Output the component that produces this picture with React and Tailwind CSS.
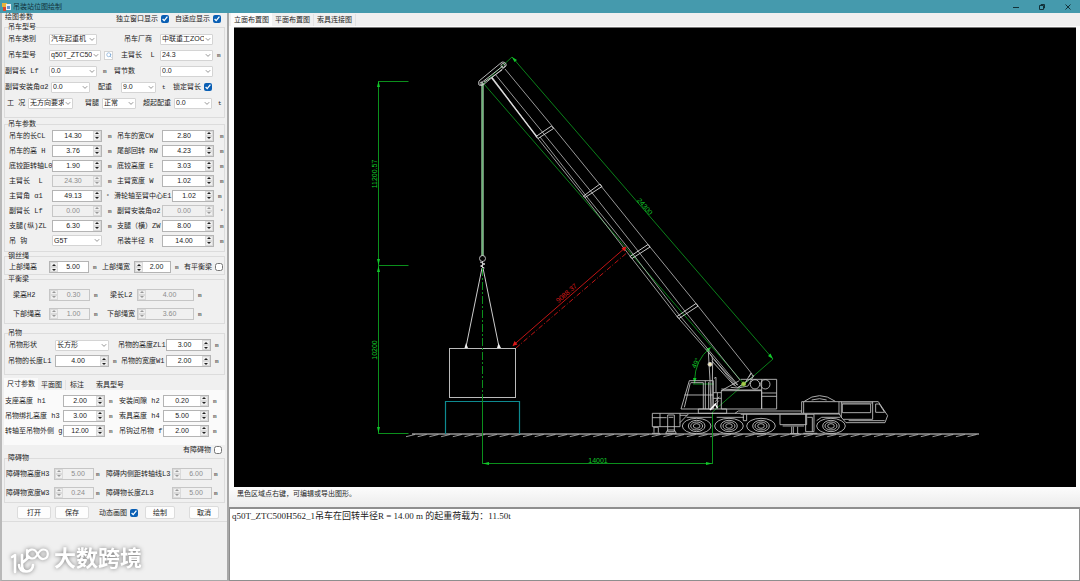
import React, { useId, useState } from "react";
import { Search } from "lucide-react";

const Row = ({ className, children }) => (
  <div className={`grid items-center ${className}`}>{children}</div>
);

const Unit = ({ children }) => (
  <span className="font-['Liberation_Mono',monospace] text-[6px] leading-[6px] pt-0.5">
    {children}
  </span>
);

const Combo = ({ label, value }) => {
  const id = useId();
  return (
    <>
      <label htmlFor={id} className="whitespace-pre">
        {label}
      </label>
      <div className="relative h-[11px]">
        <select
          id={id}
          className="block w-full h-full appearance-none bg-white border border-[#d4d4d4] rounded-[1px] pl-px pr-[7px] font-['Liberation_Sans','Noto_Sans_CJK_SC',sans-serif] overflow-hidden"
        >
          <option>{value}</option>
        </select>
        <svg
          viewBox="0 0 8 8"
          className="absolute right-px top-0.5 w-2 h-[7px] bg-white pointer-events-none"
        >
          <path d="M1.5 2.5 4 5 6.5 2.5" fill="none" stroke="#666" strokeWidth="0.8" />
        </svg>
      </div>
    </>
  );
};

const Spin = ({ label, initial, disabled, left, step = 0.1 }) => {
  const id = useId();
  const [value, setValue] = useState(initial);
  const bump = (d) => setValue((v) => (Number(v) + d).toFixed(2));
  const arrow = disabled ? "#999" : "#222";

  return (
    <>
      <label htmlFor={id} className="whitespace-pre">
        {label}
      </label>
      <div
        className={`flex h-3 border ${left ? "flex-row-reverse" : ""} ${
          disabled ? "bg-[#f0f0f0] border-[#c6c6c6]" : "bg-white border-[#b4b4b4]"
        }`}
      >
        <input
          id={id}
          type="text"
          inputMode="decimal"
          value={value}
          disabled={disabled}
          onChange={(e) => setValue(e.target.value)}
          className="min-w-0 flex-1 text-center font-['Liberation_Sans',sans-serif] leading-[10px] text-[#222] disabled:text-[#8c8c8c]"
        />
        <div className="flex flex-col w-2 shrink-0 bg-[#efefef]">
          <button
            type="button"
            aria-label="增加"
            disabled={disabled}
            onClick={() => bump(step)}
            className="flex-1 flex items-center justify-center border border-[#dadada]"
          >
            <svg viewBox="0 0 4 2" className="w-1 h-0.5">
              <path d="M0 2 2 0 4 2z" fill={arrow} />
            </svg>
          </button>
          <button
            type="button"
            aria-label="减少"
            disabled={disabled}
            onClick={() => bump(-step)}
            className="flex-1 flex items-center justify-center border border-[#dadada]"
          >
            <svg viewBox="0 0 4 2" className="w-1 h-0.5">
              <path d="M0 0 2 2 4 0z" fill={arrow} />
            </svg>
          </button>
        </div>
      </div>
    </>
  );
};

const Check = ({ label, checked }) => (
  <label className="flex items-center gap-[3px] whitespace-nowrap">
    {label}
    <input type="checkbox" defaultChecked={checked} className="size-2 accent-[#0a5fb4]" />
  </label>
);

const Group = ({ title, className = "", children }) => (
  <fieldset className={`mx-0.5 border border-[#dcdcdc] min-w-0 ${className}`}>
    <legend className="ml-[3px] leading-2">{title}</legend>
    {children}
  </fieldset>
);

const PushButton = ({ children }) => (
  <button
    type="button"
    className="h-[13px] bg-[#fdfdfd] border border-[#dcdcdc] rounded-[2px] leading-[10px]"
  >
    {children}
  </button>
);

const craneParams = [
  ["吊车的长CL", "14.30", "m", "吊车的宽CW", "2.80", "m"],
  ["吊车的高 H", "3.76", "m", "尾部回转 RW", "4.23", "m"],
  ["底铰距转轴L0", "1.90", "m", "底铰高度 E", "3.03", "m"],
  ["主臂长  L", "24.30", "m", "主臂宽度 W", "1.02", "m", true],
  ["主臂角 α1", "49.13", "°", "滑轮轴至臂中心E1", "1.02", "m"],
  ["副臂长 Lf", "0.00", "m", "副臂安装角α2", "0.00", "°", true, true],
  ["支腿(纵)ZL", "6.30", "m", "支腿（横）ZW", "8.00", "m"],
];

const sizeParams = [
  ["支座高度 h1", "2.00", "安装间隙 h2", "0.20"],
  ["吊物绑扎高度 h3", "3.00", "索具高度 h4", "5.00"],
  ["转轴至吊物外侧 g", "12.00", "吊钩过吊物 f", "2.00"],
];

const WIDE = "h-[15px] pl-1 grid-cols-[43px_50px_15px_45px_52px_1fr] [&>span]:pl-1.5";
const NARROW = "h-[15px] pl-1 grid-cols-[43px_50px_12px_58px_42px_1fr] [&>span]:pl-1";

const Watermark = () => (
  <div className="mt-auto mb-1 ml-2 flex items-center text-white drop-shadow-[0_0_2px_#777]">
    <svg
      viewBox="0 0 44 30"
      className="w-11 h-[30px]"
      fill="none"
      stroke="currentColor"
      strokeWidth="2.6"
      strokeLinecap="round"
      strokeLinejoin="round"
    >
      <path d="M2 11 5 9V26" />
      <path d="M12 9V18C12 23 14 25.500 17 25.500C20 25.500 23 23 23 19M9 19C9 23 12 26 17 25.500M12 17 19 11" />
      <path
        d="M17 4V12M17 8C18 3 24 2 26.500 6C28.500 10 30 13.500 33.500 13C39.500 12 39 3.500 33.500 3.500C29.500 3.500 28.500 7 26.500 10C24 14 18 13 17 8"
        strokeWidth="2.2"
      />
    </svg>
    <span className="text-[22px] leading-[30px] font-bold">大数跨境</span>
  </div>
);

const SidePanel = () => (
  <aside className="w-[229px] shrink-0 flex flex-col border-l-2 border-l-[#b9b9b9] border-r-2 border-r-[#a8a8a8] border-b border-b-[#a8a8a8]">
    <form className="pb-0.5 border-b border-[#dcdcdc]">
      <div className="flex h-2.5 pl-[3px] pr-1.5 leading-2">
        <span className="flex-1 self-start">绘图参数</span>
        <div className="flex gap-1.5 self-end">
          <Check label="独立窗口显示" checked />
          <Check label="自适应显示" checked />
        </div>
      </div>

      <Group title="吊车型号" className="pb-1.5">
        <Row className="h-4 pl-[3px] grid-cols-[41px_48px_27px_36px_53px]">
          <Combo label="吊车类别" value="汽车起重机" />
          <span />
          <Combo label="吊车厂商" value="中联重工ZOOMLION" />
        </Row>
        <Row className="h-4 pl-[3px] grid-cols-[41px_52px_20px_39px_53px_1fr]">
          <Combo label="吊车型号" value="q50T_ZTC500H562_1" />
          <button
            type="button"
            aria-label="查找"
            className="ml-[3px] size-[9px] flex items-center justify-center bg-white border border-[#d4d4d4]"
          >
            <Search className="size-1.5" color="#4a86c5" />
          </button>
          <Combo label="主臂长  L" value="24.3" />
          <span className="pl-1"><Unit>m</Unit></span>
        </Row>
        <Row className="h-4 grid-cols-[44px_48px_17px_46px_53px]">
          <Combo label="副臂长 Lf" value="0.0" />
          <span className="pl-1.5"><Unit>m</Unit></span>
          <Combo label="臂节数" value="0.0" />
        </Row>
        <Row className="h-4 grid-cols-[46px_39px_8px_23px_35px_17px_40px]">
          <Combo label="副臂安装角α2" value="0.0" />
          <span />
          <Combo label="配重" value="9.0" />
          <span className="pl-1.5"><Unit>t</Unit></span>
          <Check label="锁定臂长" checked />
        </Row>
        <Row className="h-4 pl-0.5 grid-cols-[21px_45px_12px_17px_34px_7px_31px_38px_1fr]">
          <Combo label="工 况" value="无方向要求" />
          <span />
          <Combo label="臂腿" value="正常" />
          <span />
          <Combo label="超起配重" value="0.0" />
          <span className="pl-1.5"><Unit>t</Unit></span>
        </Row>
      </Group>

      <Group title="吊车参数" className="mt-0.5 pb-[3px]">
        {craneParams.map(([l, lv, lu, r, rv, ru, lOff, rOff]) => (
          <Row key={l} className={r.length > 8 ? NARROW : WIDE}>
            <Spin label={l} initial={lv} disabled={lOff} />
            <Unit>{lu}</Unit>
            <Spin label={r} initial={rv} disabled={rOff} />
            <Unit>{ru}</Unit>
          </Row>
        ))}
        <Row className={WIDE}>
          <Combo label="吊 钩" value="G5T" />
          <Unit />
          <Spin label="吊装半径 R" initial="14.00" />
          <Unit>m</Unit>
        </Row>
      </Group>

      <Group title="钢丝绳">
        <Row className="h-3.5 pl-1 grid-cols-[40px_40px_13px_32px_37px_13px_1fr] [&>span]:pl-1">
          <Spin label="上部绳高" initial="5.00" left />
          <Unit>m</Unit>
          <Spin label="上部绳宽" initial="2.00" left />
          <Unit>m</Unit>
          <Check label="有平衡梁" />
        </Row>
      </Group>

      <Group title="平衡梁" className="pt-0.5">
        <Row className="h-[19px] pl-2 grid-cols-[36px_41px_20px_27px_57px_1fr] [&>span]:pl-1">
          <Spin label="梁高H2" initial="0.30" left disabled />
          <Unit>m</Unit>
          <Spin label="梁长L2" initial="4.00" left disabled />
          <Unit>m</Unit>
        </Row>
        <Row className="h-[19px] pl-2 grid-cols-[36px_41px_17px_30px_57px_1fr] [&>span]:pl-1">
          <Spin label="下部绳高" initial="1.00" left disabled />
          <Unit>m</Unit>
          <Spin label="下部绳宽" initial="3.60" left disabled />
          <Unit>m</Unit>
        </Row>
      </Group>

      <Group title="吊物" className="mt-[5px] pb-[5px]">
        <Row className="h-4 pl-1 grid-cols-[46px_54px_9px_48px_45px_1fr] [&>span]:pl-1">
          <Combo label="吊物形状" value="长方形" />
          <Unit />
          <Spin label="吊物的高度ZL1" initial="3.00" />
          <Unit>m</Unit>
        </Row>
        <Row className="h-4 pl-[3px] grid-cols-[47px_54px_12px_45px_45px_1fr] [&>span]:pl-1">
          <Spin label="吊物的长度L1" initial="4.00" />
          <Unit>m</Unit>
          <Spin label="吊物的宽度W1" initial="2.00" />
          <Unit>m</Unit>
        </Row>
      </Group>

      <div className="mt-[3px] ml-0.5 flex h-3 items-end leading-[10px]" role="tablist">
        <button type="button" role="tab" aria-selected="true" className="h-3 px-[3px] bg-[#fafafa]">
          尺寸参数
        </button>
        <button type="button" role="tab" className="px-[3px] border-r border-[#e2e2e2]">
          平面图
        </button>
        <button type="button" role="tab" className="pl-1 pr-2">
          标注
        </button>
        <button type="button" role="tab" className="px-1">
          索具型号
        </button>
      </div>
      <div className="mx-0.5 bg-[#fafafa] pt-[3px] pb-[7px]">
        {sizeParams.map(([l, lv, r, rv]) => (
          <Row
            key={l}
            className="h-[15px] pl-px grid-cols-[58px_42px_14px_44px_46px_1fr] [&>span]:pl-1"
          >
            <Spin label={l} initial={lv} />
            <Unit>m</Unit>
            <Spin label={r} initial={rv} />
            <Unit>m</Unit>
          </Row>
        ))}
      </div>

      <div className="mt-px flex h-2 justify-end pr-[5px]">
        <Check label="有障碍物" />
      </div>
      <Group title="障碍物" className="pt-0.5">
        <Row className="h-[19px] pl-px grid-cols-[48px_40px_12px_66px_40px_1fr] [&>span]:pl-0.5">
          <Spin label="障碍物高度H3" initial="5.00" left disabled />
          <Unit>m</Unit>
          <Spin label="障碍内侧距转轴线L3" initial="6.00" left disabled />
          <Unit>m</Unit>
        </Row>
        <Row className="h-[19px] pl-px grid-cols-[48px_40px_12px_66px_40px_1fr] [&>span]:pl-0.5">
          <Spin label="障碍物宽度W3" initial="0.24" left disabled />
          <Unit>m</Unit>
          <Spin label="障碍物长度ZL3" initial="5.00" left disabled />
          <Unit>m</Unit>
        </Row>
      </Group>

      <Row className="mt-[3px] pl-[15px] grid-cols-[34px_4px_34px_10px_46px_30px_14px_30px]">
        <PushButton>打开</PushButton>
        <span />
        <PushButton>保存</PushButton>
        <span />
        <Check label="动态画图" checked />
        <PushButton>绘制</PushButton>
        <span />
        <PushButton>取消</PushButton>
      </Row>
    </form>
    <Watermark />
  </aside>
);

const hatches = Array.from({ length: 49 }, (_, i) => 415 + i * 11.7);
const wheels = [170, 267, 363, 573];

const CraneDrawing = () => (
  <svg
    viewBox="234 28 842 459"
    className="w-full h-full block"
    fill="none"
    fontFamily="Liberation Sans, sans-serif"
    fontSize="7"
  >
    {/* ground */}
    <path d="M412 434H979" stroke="#ddd" strokeWidth="1.2" />
    {hatches.map((x) => (
      <path key={x} d={`M${x} 434.5l-9 2.2`} stroke="#bbb" strokeWidth="0.8" />
    ))}

    {/* load and support */}
    <rect x="449.5" y="348.5" width="66" height="49" stroke="#bbb" />
    <path d="M445.5 434V401.500H519.5V434" stroke="#0e8a90" strokeWidth="1.2" />
    <path d="M482 268 466 347M483 268 499 347" stroke="#ccc" />
    <path d="M464.500 348 466 343 468 348zM497 348 498.500 343 501 348z" fill="#eee" />

    {/* rope and hook */}
    <path d="M482.500 83V256" stroke="#9cc4a2" strokeWidth="2.4" />
    <path d="M482.500 83V256" stroke="#5fb56d" strokeWidth="0.8" />
    <circle cx="482.500" cy="258.500" r="3" stroke="#bbb" />
    <path d="M480 262 485 264 480.500 266 484.500 268M482.500 261V270" stroke="#ccc" />

    {/* dimensions */}
    <g stroke="#0b8f1c">
      <path d="M378.500 81.500H408.500M378.500 265.500H408.500M378.500 433.500H408.500M378.500 81V434" />
      <path d="M482.500 268V401" strokeDasharray="8 2 2 2" />
      <path d="M482.500 401V464M482.500 463.500H712.500M712.500 412V464" />
      <path d="M484 83 512 57 773 359 712.500 412" strokeWidth="0.9" />
      <path d="M484 84 712 347 744 384" strokeWidth="0.9" />
      <path d="M710 348Q695 360 694.500 381M693 384H714" />
    </g>
    <g fill="#12c82a">
      <path d="M378.500 81l-1.500 6h3zM378.500 265l-1.500-6h3zM378.500 266l-1.500 6h3zM378.500 433l-1.500-6h3z" />
      <path d="M483 463.500l6-1.500v3zM712 463.500l-6-1.500v3z" />
      <path d="M512 57l2.500 5 2.500-2zM773 359l-5-3 2.500-2.500zM711 347l-5 2 2.500 3zM694.500 384l-1.500-6h3.500z" />
      <text transform="translate(376.500 174) rotate(-90)" textAnchor="middle">11200.57</text>
      <text transform="translate(377 350) rotate(-90)" textAnchor="middle">10200</text>
      <text x="598" y="463" textAnchor="middle">14001</text>
      <text transform="translate(643 208) rotate(49)" textAnchor="middle">24300</text>
      <text transform="translate(698 364) rotate(-66)" textAnchor="middle">49°</text>
    </g>

    {/* boom */}
    <g stroke="#a9a9a9" strokeWidth="0.9">
      <path d="M505 69 552.700 126.700 600.700 185.700 649 245.700 696.700 304.300 752 374" />
      <path d="M495 74 544 134 593 194 638 251 684 310 740 380" />
      <path d="M492 77 537 137.300 584.300 196.700 631 257.300 677.700 317.300 709 353 736.700 387.300" />
      <path d="M540 137 587 197 633 254 680 316 738 385" />
      <path d="M751 373 745 383 737 388M754 375 748 386 738 388" />
    </g>
    <path d="M491.500 77.500 537 137" stroke="#ddd" strokeWidth="1.3" />
    <path
      d="M536 136.500 551.500 126 553.500 128.500 538 138.500zM583.500 196 600 184 602 186.500 585 197.500zM630 256.500 648 244.500 650 247 632 258.500zM677 316.500 696 303.500 698 306 679 318.500z"
      stroke="#ddd"
      strokeWidth="0.9"
    />
    <g stroke="#ccc" strokeWidth="0.9">
      <path d="M479 81 502 62Q507 62 506 66L483 85Q477 87 479 81z" />
      <path d="M481 83 503 66M484 82 492 77 502 70" />
      <circle cx="503" cy="65.500" r="2" />
      <circle cx="481.500" cy="83.500" r="1.500" />
    </g>

    {/* clearance */}
    <g stroke="#c01414">
      <path d="M513 345.500 626 247" />
      <path d="M516 348 629 251" strokeDasharray="5 2 1 2" />
    </g>
    <path d="M512.500 346l5-1.500-3-3.500zM626.500 246.500l-5 1.500 3 3.500z" fill="#e01818" />
    <text transform="translate(568 295) rotate(-41)" textAnchor="middle" fill="#d81818">
      9088.37
    </text>

    {/* carrier, drawn at three times its size */}
    <g transform="translate(640 330) scale(.3333)" stroke="#c4c4c4" strokeWidth="2.600">
      <path d="M148 152H220V237H123zM153 158H190V237M196 152V237M206 156V237M133 195H220M151 158 133 232" />
      <path d="M175 237H260V250H175zM205 65 210 150 213 240M218 92 216 235M222 145 228 142V186M205 65 216 80 218 92" />
      <path d="M215 92 284 168M222 88 292 166M272 172 292 174 340 140 334 130 326 142" />
      <path d="M220 188H244M232 188V236M220 205H244M226 215 238 200M216 236 236 212" />
      <path d="M210 240 226 222 232 234" stroke="#fff" strokeWidth="4" />
      <path d="M244 182H365V237H244zM365 148V237H410V148H302M365 189H410M365 199H410M244 182 298 152M244 177 300 180H365" />
      <circle cx="345" cy="163" r="14" />
      <circle cx="376" cy="163" r="14" />
      <path d="M37 250H120V290H37zM37 263H80M60 250V290M40 292H55V308M42 292V308M36 310H60M83 255H103V305H83zM86 262H100M77 310 83 300H103L109 310z" />
      <path d="M120 250H485M285 250 295 243H485M120 278 145 252M120 256H142M310 253V272H320V253M302 253H420M140 262 215 262M230 262 312 262" />
      <path d="M420 253H500V284H420zM428 288H492M455 290V310M473 290V310M460 290V310M450 311H478M497 253H522V305H497zM502 262H517V305M490 310H532" />
      <path d="M485 215H597V250H485zM491 215V250M493 214Q538 180 586 214M515 210Q540 202 560 210M522 252H600M530 272 545 262H600" />
      <path d="M597 215H715L743 257 735 278H618L604 262 597 250M604 215V264M698 215V268H610M607 222H692V248H607zM707 222H718L734 247H707z" />
      <path d="M604 219H698M626 272H734" />
      {wheels.map((x) => (
        <g key={x}>
          <ellipse cx={x} cy="288" rx="43" ry="23" />
          <ellipse cx={x} cy="288" rx="25" ry="17" />
          <ellipse cx={x} cy="288" rx="18" ry="12" />
          <ellipse cx={x} cy="288" rx="10" ry="7" />
        </g>
      ))}
      <circle cx="210" cy="103" r="6" fill="#f3e9b8" />
      <circle cx="311" cy="162" r="6" fill="#a8c94a" stroke="#7fbf3a" />
    </g>
  </svg>
);

const views = ["立面布置图", "平面布置图", "索具连接图"];

const Viewer = () => {
  const [active, setActive] = useState(0);
  return (
    <main className="flex-1 min-w-0 flex flex-col">
      <div className="flex h-[13px] items-end pl-0.5" role="tablist">
        {views.map((name, i) => (
          <button
            key={name}
            type="button"
            role="tab"
            aria-selected={i === active}
            onClick={() => setActive(i)}
            className={`px-[3px] leading-3 ${i === active ? "h-[13px] bg-[#fcfcfc]" : "border-r border-[#e2e2e2]"}`}
          >
            {name}
          </button>
        ))}
      </div>
      <div className="flex-1 min-h-0 pl-[5px] pr-1 pt-px bg-[#fcfcfc]">
        <div className="h-full border-t border-[#777] bg-black">
          <CraneDrawing />
        </div>
      </div>
      <p className="h-5 pl-2 leading-[14px] bg-linear-to-b from-[#fcfcfc] to-[#ececec]">
        黑色区域点右键，可编辑或导出图形。
      </p>
      <textarea
        readOnly
        aria-label="计算结果"
        value="q50T_ZTC500H562_1吊车在回转半径R = 14.00 m 的起重荷载为：11.50t"
        className="block h-[74px] resize-none bg-white border border-t-2 border-[#8e8e8e] pl-0.5 pt-px text-[9px] leading-3 font-['Liberation_Serif','Noto_Sans_CJK_SC',serif]"
      />
    </main>
  );
};

const TitleBar = () => (
  <header className="flex h-[13px] shrink-0 items-center bg-[#459aad] text-[#12323a] pl-0.5 pr-2">
    <svg viewBox="0 0 9 9" className="size-[9px]">
      <path d="M0 1H5V5H0z" fill="#e9b33c" />
      <path d="M4 2H9V8H4z" fill="#e8eef5" />
      <path d="M1 5H4V9H1z" fill="#d8472f" />
      <path d="M5 4H8V7H5z" fill="#5f8fd0" />
    </svg>
    <h1 className="ml-0.5 flex-1">吊装站位图绘制</h1>
    <div className="flex gap-[18px]">
      <button type="button" aria-label="最小化">
        <svg viewBox="0 0 8 8" className="size-2" stroke="currentColor">
          <path d="M1 4.500H7" />
        </svg>
      </button>
      <button type="button" aria-label="还原">
        <svg viewBox="0 0 8 8" className="size-2" fill="none" stroke="currentColor">
          <path d="M1.500 2.500H5.500V6.500H1.500zM3 2.500V1.500H6.500V5H5.500" />
        </svg>
      </button>
      <button type="button" aria-label="关闭">
        <svg viewBox="0 0 8 8" className="size-2" stroke="currentColor">
          <path d="M1.500 1.500 6.500 6.500M6.500 1.500 1.500 6.500" />
        </svg>
      </button>
    </div>
  </header>
);

const App = () => (
  <div className="h-screen flex flex-col bg-[#f0f0f0] text-[#1c1c1c] text-[7px] leading-2 font-['Liberation_Mono','Noto_Sans_CJK_SC',monospace]">
    <TitleBar />
    <div className="flex flex-1 min-h-0">
      <SidePanel />
      <Viewer />
    </div>
  </div>
);

export default App;
